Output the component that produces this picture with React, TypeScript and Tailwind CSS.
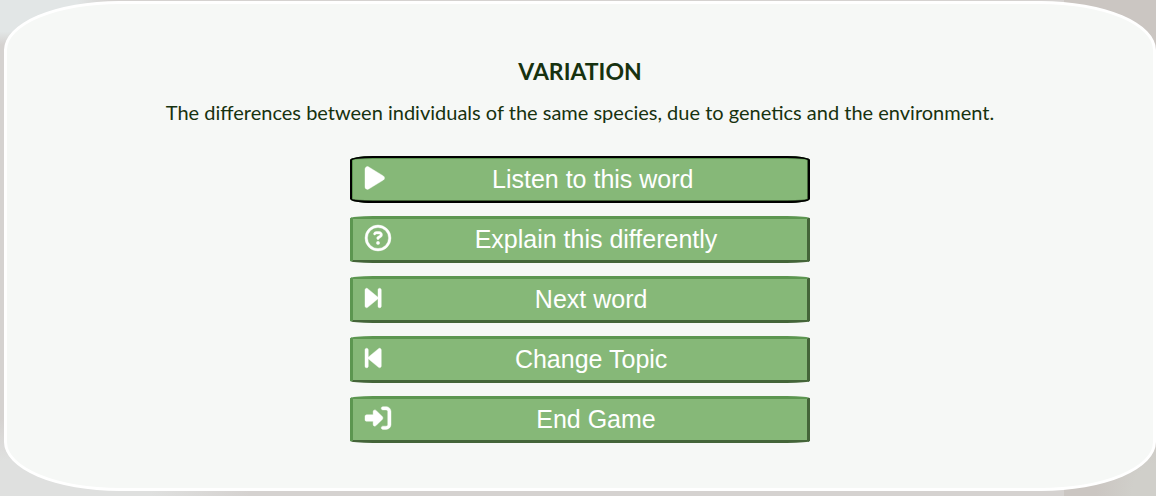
import type { ReactNode } from "react";
import { FaRegCircleQuestion, FaRightToBracket } from "react-icons/fa6";

type Action = { label: string; icon: ReactNode; active?: boolean };

function NarrowIcon({ width, path }: { width: number; path: string }) {
  return (
    <svg
      viewBox={`0 0 ${width} 512`}
      fill="currentColor"
      stroke="currentColor"
      aria-hidden="true"
      className="h-[26px] w-auto shrink-0 overflow-visible stroke-[8px]"
    >
      <path d={path} />
    </svg>
  );
}

const wideIcon = "h-[26px] w-[26px] shrink-0 overflow-visible stroke-[8px]";

const actions: Action[] = [
  {
    label: "Listen to this word",
    icon: (
      <NarrowIcon
        width={384}
        path="M73 39c-14.8-9.1-33.4-9.4-48.5-.9S0 62.6 0 80V432c0 17.4 9.4 33.4 24.5 41.9s33.7 8.1 48.5-.9L361 297c14.3-8.7 23-24.2 23-41s-8.7-32.2-23-41L73 39z"
      />
    ),
    active: true,
  },
  {
    label: "Explain this differently",
    icon: <FaRegCircleQuestion aria-hidden="true" className={wideIcon} />,
  },
  {
    label: "Next word",
    icon: (
      <NarrowIcon
        width={320}
        path="M52.5 440.6c-9.5 7.9-22.8 9.7-34.1 4.4S0 428.4 0 416V96C0 83.6 7.2 72.3 18.4 67s24.5-3.6 34.1 4.4l192 160L256 241V96c0-17.7 14.3-32 32-32s32 14.3 32 32V416c0 17.7-14.3 32-32 32s-32-14.3-32-32V271l-11.5 9.6-192 160z"
      />
    ),
  },
  {
    label: "Change Topic",
    icon: (
      <NarrowIcon
        width={320}
        path="M267.5 440.6c9.5 7.9 22.8 9.7 34.1 4.4s18.4-16.6 18.4-29V96c0-12.4-7.2-23.7-18.4-29s-24.5-3.6-34.1 4.4l-192 160L64 241V96c0-17.7-14.3-32-32-32S0 78.3 0 96V416c0 17.7 14.3 32 32 32s32-14.3 32-32V271l11.5 9.6 192 160z"
      />
    ),
  },
  {
    label: "End Game",
    icon: <FaRightToBracket aria-hidden="true" className={wideIcon} />,
  },
];

function ActionButton({ label, icon, active }: Action) {
  const outline = active
    ? "rounded-[5%/9%] outline-2 -outline-offset-2 outline-black"
    : "rounded-[5%]";
  return (
    <button
      type="button"
      className={`flex w-full items-start gap-1.5 border-3 border-t-[#5c9650] border-r-[#446539] border-b-[#446539] border-l-[#5c9650] bg-[#86b878] px-3 py-1.5 text-[25px] leading-[29px] text-white ${outline}`}
    >
      {icon}
      <span className="flex-1 text-center">{label}</span>
    </button>
  );
}

export default function App() {
  return (
    <div className="min-h-screen bg-[#d5d2d0] bg-[radial-gradient(ellipse_110px_45px_at_0_0,#e2e6e6_70%,transparent),radial-gradient(ellipse_200px_80px_at_50px_100%,#dfe0df_50%,transparent),radial-gradient(ellipse_60px_80px_at_100%_100%,#d0cfca_40%,transparent),linear-gradient(90deg,transparent_92%,#cbc6c2_92%)] pt-px pb-[5px] pl-1">
      <main className="flex flex-col items-center rounded-[10%] border-3 border-white bg-[#f6f8f6] px-6 pt-[51px] pb-[45px] font-['Liberation_Sans',Arial,sans-serif]">
        <h1 className="font-['Lato','Open_Sans',sans-serif] text-[23px] leading-8 font-bold text-[#17320f]">
          VARIATION
        </h1>
        <p className="mt-[9px] text-center font-['Lato','Open_Sans',sans-serif] text-xl leading-8 text-[#17320f]">
          The differences between individuals of the same species, due to genetics and the environment.
        </p>
        <div className="mt-7 flex w-full max-w-[460px] flex-col gap-[13px]">
          {actions.map((action) => (
            <ActionButton key={action.label} {...action} />
          ))}
        </div>
      </main>
    </div>
  );
}
